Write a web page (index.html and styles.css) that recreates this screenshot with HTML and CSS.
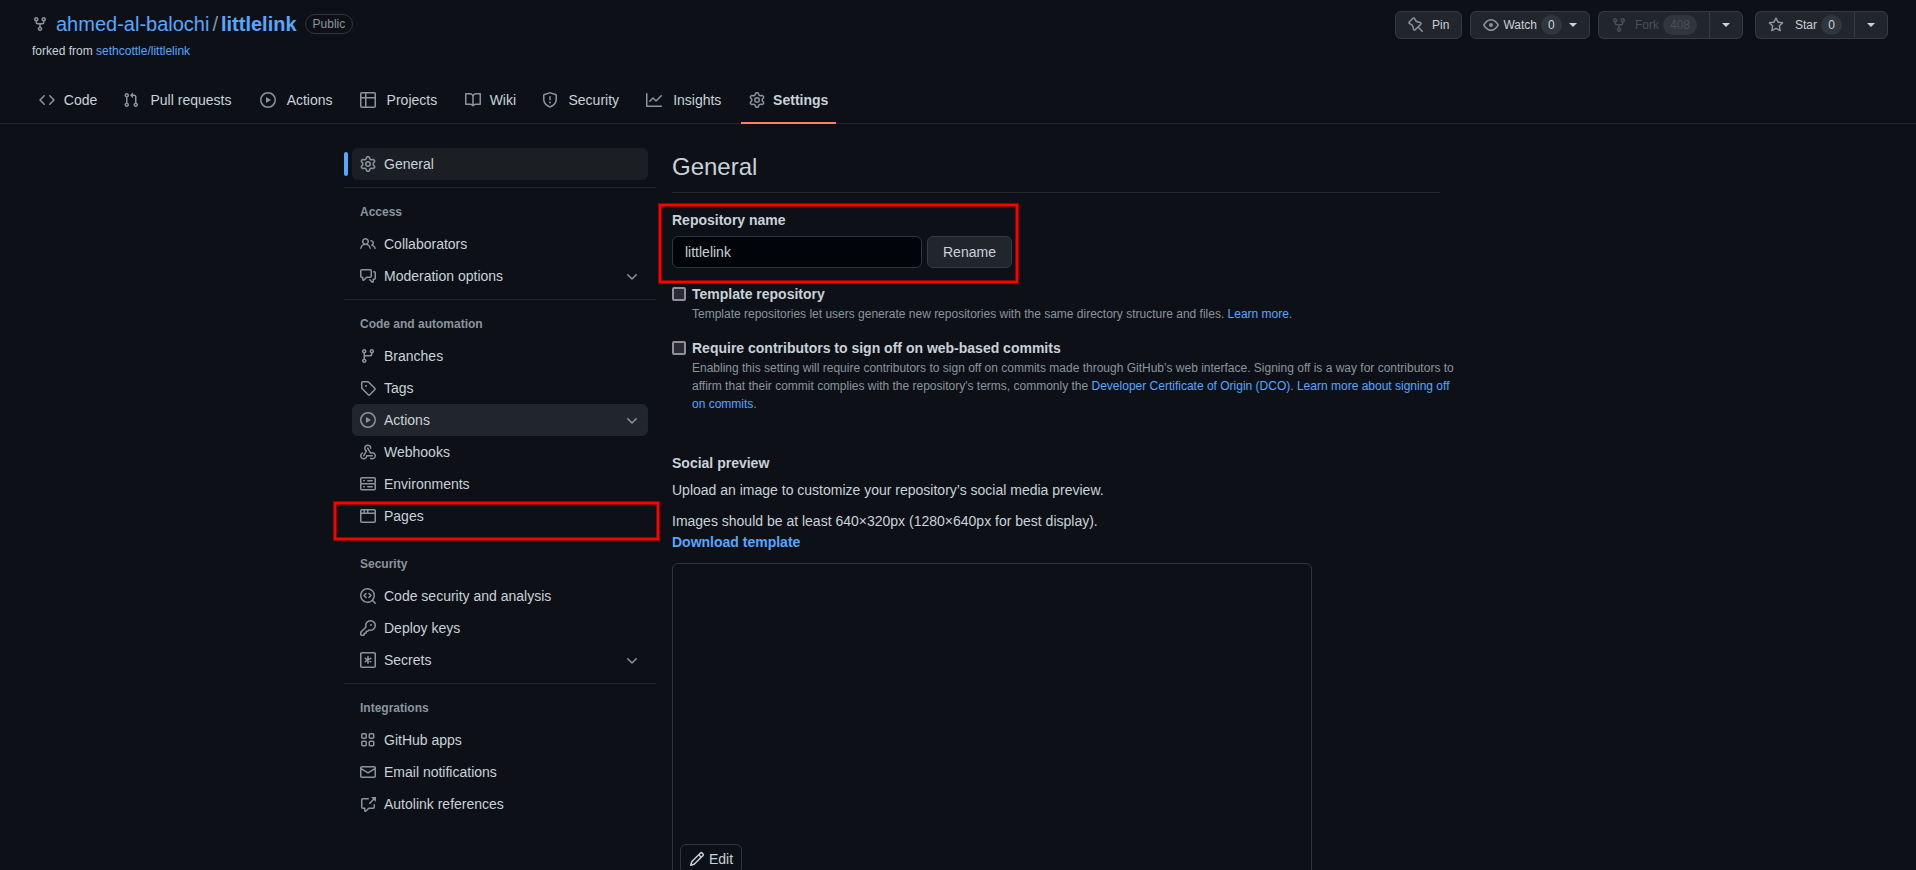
FILE: index.html
```html
<!DOCTYPE html>
<html lang="en">
<head>
<meta charset="utf-8">
<meta name="viewport" content="width=device-width, initial-scale=1">
<title>Settings · ahmed-al-balochi/littlelink</title>
<link rel="stylesheet" href="styles.css">
</head>
<body>
<svg class="sprite" aria-hidden="true">
<symbol id="fork" viewBox="0 0 16 16"><path fill-rule="evenodd" d="M5 3.25a.75.75 0 11-1.5 0 .75.75 0 011.5 0zm0 2.122a2.25 2.25 0 10-1.5 0v.878A2.25 2.25 0 005.75 8.5h1.5v2.128a2.251 2.251 0 101.5 0V8.5h1.5a2.25 2.25 0 002.25-2.25v-.878a2.25 2.25 0 10-1.5 0v.878a.75.75 0 01-.75.75h-4.5A.75.75 0 015 6.25v-.878zm3.75 7.378a.75.75 0 11-1.5 0 .75.75 0 011.5 0zm3-8.75a.75.75 0 100-1.5.75.75 0 000 1.5z"/></symbol>
<symbol id="code" viewBox="0 0 16 16"><path fill-rule="evenodd" d="M4.72 3.22a.75.75 0 011.06 1.06L2.06 8l3.72 3.72a.75.75 0 11-1.06 1.06L.47 8.53a.75.75 0 010-1.06l4.25-4.25zm6.56 0a.75.75 0 10-1.06 1.06L13.94 8l-3.72 3.72a.75.75 0 101.06 1.06l4.25-4.25a.75.75 0 000-1.06l-4.25-4.25z"/></symbol>
<symbol id="pull" viewBox="0 0 16 16"><path fill-rule="evenodd" d="M7.177 3.073L9.573.677A.25.25 0 0110 .854v4.792a.25.25 0 01-.427.177L7.177 3.427a.25.25 0 010-.354zM3.75 2.5a.75.75 0 100 1.5.75.75 0 000-1.5zm-2.25.75a2.25 2.25 0 113 2.122v5.256a2.251 2.251 0 11-1.5 0V5.372A2.25 2.25 0 011.5 3.25zM11 2.5h-1V4h1a1 1 0 011 1v5.628a2.251 2.251 0 101.5 0V5A2.5 2.5 0 0011 2.5zm1 10.25a.75.75 0 111.5 0 .75.75 0 01-1.5 0zM3.75 12a.75.75 0 100 1.5.75.75 0 000-1.5z"/></symbol>
<symbol id="play" viewBox="0 0 16 16"><path fill-rule="evenodd" d="M1.5 8a6.5 6.5 0 1113 0 6.5 6.5 0 01-13 0zM8 0a8 8 0 100 16A8 8 0 008 0zM6.379 5.227A.25.25 0 006 5.442v5.117a.25.25 0 00.379.214l4.264-2.559a.25.25 0 000-.428L6.379 5.227z"/></symbol>
<symbol id="table" viewBox="0 0 16 16"><path fill-rule="evenodd" d="M0 1.75C0 .784.784 0 1.75 0h12.5C15.216 0 16 .784 16 1.75v12.5A1.75 1.75 0 0114.25 16H1.75A1.75 1.75 0 010 14.25V1.75zM1.5 6.5v7.75c0 .138.112.25.25.25H5v-8H1.5zM5 5H1.5V1.75a.25.25 0 01.25-.25H5V5zm1.5 1.5v8h7.75a.25.25 0 00.25-.25V6.5h-8zm8-1.5h-8V1.5h7.75a.25.25 0 01.25.25V5z"/></symbol>
<symbol id="book" viewBox="0 0 16 16"><path fill-rule="evenodd" d="M0 1.75A.75.75 0 01.75 1h4.253c1.227 0 2.317.59 3 1.501A3.744 3.744 0 0111.006 1h4.245a.75.75 0 01.75.75v10.5a.75.75 0 01-.75.75h-4.507a2.25 2.25 0 00-1.591.659l-.622.621a.75.75 0 01-1.06 0l-.622-.621A2.25 2.25 0 005.258 13H.75a.75.75 0 01-.75-.75V1.75zm8.755 3a2.25 2.25 0 012.25-2.25H14.5v9h-3.757c-.71 0-1.4.201-1.992.572l.004-7.322zm-1.504 7.324l.004-5.073-.002-2.253A2.25 2.25 0 005.003 2.5H1.5v9h3.757a3.75 3.75 0 011.994.574z"/></symbol>
<symbol id="shield" viewBox="0 0 16 16"><path fill-rule="evenodd" d="M7.467.133a1.75 1.75 0 011.066 0l5.25 1.68A1.75 1.75 0 0115 3.48V7c0 1.566-.32 3.182-1.303 4.682-.983 1.498-2.585 2.813-5.032 3.855a1.7 1.7 0 01-1.33 0c-2.447-1.042-4.049-2.357-5.032-3.855C1.32 10.182 1 8.566 1 7V3.48a1.75 1.75 0 011.217-1.667l5.25-1.68zm.61 1.429a.25.25 0 00-.153 0l-5.25 1.68a.25.25 0 00-.174.238V7c0 1.358.275 2.666 1.057 3.86.784 1.194 2.121 2.34 4.366 3.297a.2.2 0 00.154 0c2.245-.956 3.582-2.104 4.366-3.298C13.225 9.666 13.5 8.36 13.5 7V3.48a.25.25 0 00-.174-.237l-5.25-1.68zM9 10.5a1 1 0 11-2 0 1 1 0 012 0zm-.25-5.75a.75.75 0 10-1.5 0v3a.75.75 0 001.5 0v-3z"/></symbol>
<symbol id="graph" viewBox="0 0 16 16"><path fill-rule="evenodd" d="M1.5 1.75a.75.75 0 00-1.5 0v12.5c0 .414.336.75.75.75h14.5a.75.75 0 000-1.5H1.5V1.75zm14.28 2.53a.75.75 0 00-1.06-1.06L10 7.94 7.53 5.47a.75.75 0 00-1.06 0L3.22 8.72a.75.75 0 001.06 1.06L7 7.06l2.47 2.47a.75.75 0 001.06 0l5.25-5.25z"/></symbol>
<symbol id="gear" viewBox="0 0 16 16"><path fill-rule="evenodd" d="M7.429 1.525a6.593 6.593 0 011.142 0c.036.003.108.036.137.146l.289 1.105c.147.56.55.967.997 1.189.174.086.341.183.501.29.417.278.97.423 1.53.27l1.102-.303c.11-.03.175.016.195.046.219.31.41.641.573.989.014.031.022.11-.059.19l-.815.806c-.411.406-.562.957-.53 1.456a4.588 4.588 0 010 .582c-.032.499.119 1.05.53 1.456l.815.806c.08.08.073.159.059.19a6.494 6.494 0 01-.573.99c-.02.029-.086.074-.195.045l-1.103-.303c-.559-.153-1.112-.008-1.529.27-.16.107-.327.204-.5.29-.449.222-.851.628-.998 1.189l-.289 1.105c-.029.11-.101.143-.137.146a6.613 6.613 0 01-1.142 0c-.036-.003-.108-.037-.137-.146l-.289-1.105c-.147-.56-.55-.967-.997-1.189a4.502 4.502 0 01-.501-.29c-.417-.278-.97-.423-1.53-.27l-1.102.303c-.11.03-.175-.016-.195-.046a6.492 6.492 0 01-.573-.989c-.014-.031-.022-.11.059-.19l.815-.806c.411-.406.562-.957.53-1.456a4.587 4.587 0 010-.582c.032-.499-.119-1.05-.53-1.456l-.815-.806c-.08-.08-.073-.159-.059-.19a6.44 6.44 0 01.573-.99c.02-.029.086-.075.195-.045l1.103.303c.559.153 1.112.008 1.529-.27.16-.107.327-.204.5-.29.449-.222.851-.628.998-1.189l.289-1.105c.029-.11.101-.143.137-.146zM8 0c-.236 0-.47.01-.701.03-.743.065-1.29.615-1.458 1.261l-.29 1.106c-.017.066-.078.158-.211.224a5.994 5.994 0 00-.668.386c-.123.082-.233.09-.3.071L3.27 2.776c-.644-.177-1.392.02-1.82.63a7.977 7.977 0 00-.704 1.217c-.315.675-.111 1.422.363 1.891l.815.806c.05.048.098.147.088.294a6.084 6.084 0 000 .772c.01.147-.038.246-.088.294l-.815.806c-.474.469-.678 1.216-.363 1.891.2.428.436.835.704 1.218.428.609 1.176.806 1.82.63l1.103-.303c.066-.019.176-.011.299.071.213.143.436.272.668.386.133.066.194.158.212.224l.289 1.106c.169.646.715 1.196 1.458 1.26a8.094 8.094 0 001.402 0c.743-.064 1.29-.614 1.458-1.26l.29-1.106c.017-.066.078-.158.211-.224a5.98 5.98 0 00.668-.386c.123-.082.233-.09.3-.071l1.102.302c.644.177 1.392-.02 1.82-.63.268-.382.505-.789.704-1.217.315-.675.111-1.422-.364-1.891l-.814-.806c-.05-.048-.098-.147-.088-.294a6.1 6.1 0 000-.772c-.01-.147.039-.246.088-.294l.814-.806c.475-.469.679-1.216.364-1.891a7.992 7.992 0 00-.704-1.218c-.428-.609-1.176-.806-1.82-.63l-1.103.303c-.066.019-.176.011-.299-.071a5.991 5.991 0 00-.668-.386c-.133-.066-.194-.158-.212-.224L10.16 1.29C9.99.645 9.444.095 8.701.031A8.094 8.094 0 008 0zm1.5 8a1.5 1.5 0 11-3 0 1.5 1.5 0 013 0zM11 8a3 3 0 11-6 0 3 3 0 016 0z"/></symbol>
<symbol id="people" viewBox="0 0 16 16"><path fill-rule="evenodd" d="M5.5 3.5a2 2 0 100 4 2 2 0 000-4zM2 5.5a3.5 3.5 0 115.898 2.549 5.507 5.507 0 013.034 4.084.75.75 0 11-1.482.235 4.001 4.001 0 00-7.9 0 .75.75 0 01-1.482-.236A5.507 5.507 0 013.102 8.05 3.49 3.49 0 012 5.5zM11 4a.75.75 0 100 1.5 1.5 1.5 0 01.666 2.844.75.75 0 00-.416.672v.352a.75.75 0 00.574.73c1.2.289 2.162 1.2 2.522 2.372a.75.75 0 101.434-.44 5.01 5.01 0 00-2.56-3.012A3 3 0 0011 4z"/></symbol>
<symbol id="discussion" viewBox="0 0 16 16"><path fill-rule="evenodd" d="M1.5 2.75a.25.25 0 01.25-.25h8.5a.25.25 0 01.25.25v5.5a.25.25 0 01-.25.25h-3.5a.75.75 0 00-.53.22L3.5 11.44V9.25a.75.75 0 00-.75-.75h-1a.25.25 0 01-.25-.25v-5.5zM1.75 1A1.75 1.75 0 000 2.75v5.5C0 9.216.784 10 1.75 10H2v1.543a1.457 1.457 0 002.487 1.03L7.061 10h3.189A1.75 1.75 0 0012 8.25v-5.5A1.75 1.75 0 0010.25 1h-8.5zM14.5 4.75a.25.25 0 00-.25-.25h-.5a.75.75 0 110-1.5h.5c.966 0 1.75.784 1.75 1.75v5.5A1.75 1.75 0 0114.25 12H14v1.543a1.457 1.457 0 01-2.487 1.03L9.22 12.28a.75.75 0 111.06-1.06l2.22 2.22v-2.19a.75.75 0 01.75-.75h1a.25.25 0 00.25-.25v-5.5z"/></symbol>
<symbol id="chevron" viewBox="0 0 16 16"><path fill-rule="evenodd" d="M12.78 6.22a.75.75 0 010 1.06l-4.25 4.25a.75.75 0 01-1.06 0L3.22 7.28a.75.75 0 011.06-1.06L8 9.94l3.72-3.72a.75.75 0 011.06 0z"/></symbol>
<symbol id="branch" viewBox="0 0 16 16"><path fill-rule="evenodd" d="M11.75 2.5a.75.75 0 100 1.5.75.75 0 000-1.5zm-2.25.75a2.25 2.25 0 113 2.122V6A2.5 2.5 0 0110 8.5H6a1 1 0 00-1 1v1.128a2.251 2.251 0 11-1.5 0V5.372a2.25 2.25 0 111.5 0v1.836A2.492 2.492 0 016 7h4a1 1 0 001-1v-.628A2.25 2.25 0 019.5 3.25zM4.25 12a.75.75 0 100 1.5.75.75 0 000-1.5zM3.5 3.25a.75.75 0 111.5 0 .75.75 0 01-1.5 0z"/></symbol>
<symbol id="tag" viewBox="0 0 16 16"><path fill-rule="evenodd" d="M2.5 7.775V2.75a.25.25 0 01.25-.25h5.025a.25.25 0 01.177.073l6.25 6.25a.25.25 0 010 .354l-5.025 5.025a.25.25 0 01-.354 0l-6.25-6.25a.25.25 0 01-.073-.177zm-1.5 0V2.75C1 1.784 1.784 1 2.75 1h5.025c.464 0 .91.184 1.238.513l6.25 6.25a1.75 1.75 0 010 2.474l-5.026 5.026a1.75 1.75 0 01-2.474 0l-6.25-6.25A1.75 1.75 0 011 7.775zM6 5a1 1 0 100 2 1 1 0 000-2z"/></symbol>
<symbol id="webhook" viewBox="0 0 16 16"><path d="M5.5 4.25a2.25 2.25 0 014.5 0 .75.75 0 001.5 0 3.75 3.75 0 10-6.14 2.889l-2.272 4.258a.75.75 0 001.324.706L7 7.25a.75.75 0 00-.309-1.015A2.25 2.25 0 015.5 4.25z"/><path d="M7.364 3.607a.75.75 0 011.03.257l2.608 4.349a3.75 3.75 0 11-.628 6.785.75.75 0 01.752-1.299 2.25 2.25 0 10-.033-3.88.75.75 0 01-1.03-.256L7.107 4.636a.75.75 0 01.257-1.03z"/><path d="M2.9 8.776A.75.75 0 012.625 9.8 2.25 2.25 0 106 11.75a.75.75 0 01.75-.751h5.5a.75.75 0 010 1.5H7.425a3.751 3.751 0 11-5.55-3.998.75.75 0 011.024.274z"/></symbol>
<symbol id="server" viewBox="0 0 16 16"><path fill-rule="evenodd" d="M1.75 1A1.75 1.75 0 000 2.75v4c0 .372.116.717.314 1a1.742 1.742 0 00-.314 1v4c0 .966.784 1.75 1.75 1.75h12.5A1.75 1.75 0 0016 12.75v-4c0-.372-.116-.717-.314-1 .198-.283.314-.628.314-1v-4A1.75 1.75 0 0014.25 1H1.75zm0 7.5a.25.25 0 00-.25.25v4c0 .138.112.25.25.25h12.5a.25.25 0 00.25-.25v-4a.25.25 0 00-.25-.25H1.75zM1.5 2.75a.25.25 0 01.25-.25h12.5a.25.25 0 01.25.25v4a.25.25 0 01-.25.25H1.75a.25.25 0 01-.25-.25v-4zm5.5 2A.75.75 0 017.75 4h4.5a.75.75 0 010 1.5h-4.5A.75.75 0 017 4.75zM7.75 10a.75.75 0 000 1.5h4.5a.75.75 0 000-1.5h-4.5zM3 4.75A.75.75 0 013.75 4h.5a.75.75 0 010 1.5h-.5A.75.75 0 013 4.75zM3.75 10a.75.75 0 000 1.5h.5a.75.75 0 000-1.5h-.5z"/></symbol>
<symbol id="browser" viewBox="0 0 16 16"><path fill-rule="evenodd" d="M0 2.75C0 1.784.784 1 1.75 1h12.5c.966 0 1.75.784 1.75 1.75v10.5A1.75 1.75 0 0114.25 15H1.75A1.75 1.75 0 010 13.25V2.75zm1.75-.25a.25.25 0 00-.25.25V4.5h2v-2H1.75zM5 2.5v2h2v-2H5zm3.5 0v2h6V2.75a.25.25 0 00-.25-.25H8.5zm6 3.5h-13v7.25c0 .138.112.25.25.25h12.5a.25.25 0 00.25-.25V6z"/></symbol>
<symbol id="codescan" viewBox="0 0 16 16"><path d="M8.47 4.97a.75.75 0 000 1.06L9.94 7.5 8.47 8.97a.75.75 0 101.06 1.06l2-2a.75.75 0 000-1.06l-2-2a.75.75 0 00-1.06 0zM6.53 6.03a.75.75 0 00-1.06-1.06l-2 2a.75.75 0 000 1.06l2 2a.75.75 0 101.06-1.06L5.06 7.5l1.47-1.47z"/><path fill-rule="evenodd" d="M12.246 13.307a7.5 7.5 0 111.06-1.06l2.474 2.473a.75.75 0 11-1.06 1.06l-2.474-2.473zM1.5 7.5a6 6 0 1110.386 4.094.75.75 0 00-.292.293A6 6 0 011.5 7.5z"/></symbol>
<symbol id="key" viewBox="0 0 16 16"><path fill-rule="evenodd" d="M6.5 5.5a4 4 0 112.731 3.795.75.75 0 00-.768.18L7.44 10.5H6.25a.75.75 0 00-.75.75v1.19l-.06.06H4.25a.75.75 0 00-.75.75v1.19l-.06.06H1.75a.25.25 0 01-.25-.25v-1.69l5.024-5.023a.75.75 0 00.181-.768A3.995 3.995 0 016.5 5.5zm4-5.5a5.5 5.5 0 00-5.348 6.788L.22 11.72a.75.75 0 00-.22.53v2C0 15.216.784 16 1.75 16h2a.75.75 0 00.53-.22l.5-.5a.75.75 0 00.22-.53V14h.75a.75.75 0 00.53-.22l.5-.5a.75.75 0 00.22-.53V12h.75a.75.75 0 00.53-.22l.932-.932A5.5 5.5 0 1010.5 0zm.5 6a1 1 0 100-2 1 1 0 000 2z"/></symbol>
<symbol id="asterisk" viewBox="0 0 16 16"><rect x=".75" y=".75" width="14.5" height="14.5" rx="1" fill="none" stroke="currentColor" stroke-width="1.5"/><path d="M8 4.75v6.5M5.2 6.4l5.6 3.2M5.2 9.6l5.6-3.2" fill="none" stroke="currentColor" stroke-width="1.6" stroke-linecap="round"/></symbol>
<symbol id="apps" viewBox="0 0 16 16"><g fill="none" stroke="currentColor" stroke-width="1.5"><rect x="1.75" y="1.75" width="4.5" height="4.5" rx="1"/><rect x="9.25" y="1.75" width="4.5" height="4.5" rx="1"/><rect x="1.75" y="9.25" width="4.5" height="4.5" rx="1"/><rect x="9.25" y="9.25" width="4.5" height="4.5" rx="1"/></g></symbol>
<symbol id="mail" viewBox="0 0 16 16"><path fill-rule="evenodd" d="M1.75 2A1.75 1.75 0 000 3.75v8.5C0 13.216.784 14 1.75 14h12.5A1.75 1.75 0 0016 12.25v-8.5A1.75 1.75 0 0014.25 2H1.75zM14.5 4.07v-.32a.25.25 0 00-.25-.25H1.75a.25.25 0 00-.25.25v.32L8 7.88l6.5-3.81zm-13 1.74v6.441c0 .138.112.25.25.25h12.5a.25.25 0 00.25-.25V5.809L8.38 9.397a.75.75 0 01-.76 0L1.5 5.809z"/></symbol>
<symbol id="crossref" viewBox="0 0 16 16"><path fill-rule="evenodd" d="M16 1.25v4.146a.25.25 0 01-.427.177L14.03 4.03l-3.75 3.75a.75.75 0 11-1.06-1.06l3.75-3.75-1.543-1.543A.25.25 0 0111.604 1h4.146a.25.25 0 01.25.25zM2.75 3.5a.25.25 0 00-.25.25v7.5c0 .138.112.25.25.25h2a.75.75 0 01.75.75v2.19l2.72-2.72a.75.75 0 01.53-.22h4.5a.25.25 0 00.25-.25v-2.5a.75.75 0 111.5 0v2.5A1.75 1.75 0 0113.25 13H9.06l-2.573 2.573A1.457 1.457 0 014 14.543V13H2.75A1.75 1.75 0 011 11.25v-7.5C1 2.784 1.784 2 2.75 2h5.5a.75.75 0 010 1.5h-5.5z"/></symbol>
<symbol id="pencil" viewBox="0 0 16 16"><path fill-rule="evenodd" d="M11.013 1.427a1.75 1.75 0 012.474 0l1.086 1.086a1.75 1.75 0 010 2.474l-8.61 8.61c-.21.21-.47.364-.756.445l-3.251.93a.75.75 0 01-.927-.928l.929-3.25a1.75 1.75 0 01.445-.758l8.61-8.61zm1.414 1.06a.25.25 0 00-.354 0L10.811 3.75l1.439 1.44 1.263-1.263a.25.25 0 000-.354l-1.086-1.086zM11.189 6.25L9.75 4.81l-6.286 6.287a.25.25 0 00-.064.108l-.558 1.953 1.953-.558a.249.249 0 00.108-.064l6.286-6.286z"/></symbol>
<symbol id="pin" viewBox="0 0 16 16"><path fill-rule="evenodd" d="M4.456.734a1.75 1.75 0 012.826.504l.613 1.327a3.081 3.081 0 002.084 1.707l2.454.584c1.332.317 1.8 1.972.832 2.94L11.06 10l3.72 3.72a.75.75 0 11-1.061 1.06L10 11.06l-2.204 2.205c-.968.968-2.623.5-2.94-.832l-.584-2.454a3.081 3.081 0 00-1.707-2.084l-1.327-.613a1.75 1.75 0 01-.504-2.826L4.456.734zM5.92 1.866a.25.25 0 00-.404-.072L1.794 5.516a.25.25 0 00.072.404l1.328.613A4.582 4.582 0 015.73 9.63l.584 2.454a.25.25 0 00.42.12l5.47-5.47a.25.25 0 00-.12-.42L9.63 5.73a4.581 4.581 0 01-3.098-2.537L5.92 1.866z"/></symbol>
<symbol id="eye" viewBox="0 0 16 16"><path fill-rule="evenodd" d="M1.679 7.932c.412-.621 1.242-1.75 2.366-2.717C5.175 4.242 6.527 3.5 8 3.5c1.473 0 2.824.742 3.955 1.715 1.124.967 1.954 2.096 2.366 2.717a.119.119 0 010 .136c-.412.621-1.242 1.75-2.366 2.717C10.825 11.758 9.473 12.5 8 12.5c-1.473 0-2.824-.742-3.955-1.715C2.92 9.818 2.09 8.69 1.679 8.068a.119.119 0 010-.136zM8 2c-1.981 0-3.67.992-4.933 2.078C1.797 5.169.88 6.423.43 7.1a1.619 1.619 0 000 1.798c.45.678 1.367 1.932 2.637 3.024C4.329 13.008 6.019 14 8 14c1.981 0 3.67-.992 4.933-2.078 1.27-1.091 2.187-2.345 2.637-3.023a1.619 1.619 0 000-1.798c-.45-.678-1.367-1.932-2.637-3.023C11.671 2.992 9.981 2 8 2zm0 8a2 2 0 100-4 2 2 0 000 4z"/></symbol>
<symbol id="star" viewBox="0 0 16 16"><path fill-rule="evenodd" d="M8 .25a.75.75 0 01.673.418l1.882 3.815 4.21.612a.75.75 0 01.416 1.279l-3.046 2.97.719 4.192a.75.75 0 01-1.088.791L8 12.347l-3.766 1.98a.75.75 0 01-1.088-.79l.72-4.194L.818 6.374a.75.75 0 01.416-1.28l4.21-.611L7.327.668A.75.75 0 018 .25zm0 2.445L6.615 5.5a.75.75 0 01-.564.41l-3.097.45 2.24 2.184a.75.75 0 01.216.664l-.528 3.084 2.769-1.456a.75.75 0 01.698 0l2.77 1.456-.53-3.084a.75.75 0 01.216-.664l2.24-2.183-3.096-.45a.75.75 0 01-.564-.41L8 2.694z"/></symbol>
</svg>

<header class="repo-header">
  <div class="repo-top">
    <div>
      <h1 class="repo-title">
        <svg class="icon"><use href="#fork"/></svg>
        <a href="#">ahmed-al-balochi</a><span class="slash">/</span><a class="strong" href="#">littlelink</a>
        <span class="pill">Public</span>
      </h1>
      <p class="forked">forked from <a href="#">sethcottle/littlelink</a></p>
    </div>
    <div class="repo-actions">
      <button class="btn btn-sm" type="button"><svg class="icon"><use href="#pin"/></svg>Pin</button>
      <button class="btn btn-sm btn-watch" type="button"><svg class="icon"><use href="#eye"/></svg>Watch<span class="counter">0</span><span class="caret"></span></button>
      <div class="btn-group btn-group-fork">
        <button class="btn btn-sm" type="button" disabled><svg class="icon"><use href="#fork"/></svg>Fork<span class="counter">408</span></button>
        <button class="btn btn-sm" type="button" aria-label="See your forks"><span class="caret"></span></button>
      </div>
      <div class="btn-group btn-group-star">
        <button class="btn btn-sm btn-star" type="button"><svg class="icon"><use href="#star"/></svg>Star<span class="counter">0</span></button>
        <button class="btn btn-sm" type="button" aria-label="Add to list"><span class="caret"></span></button>
      </div>
    </div>
  </div>
  <nav class="tabs" aria-label="Repository">
    <a class="tab" href="#"><svg class="icon"><use href="#code"/></svg><span class="tab-label" data-content="Code">Code</span></a>
    <a class="tab" href="#"><svg class="icon"><use href="#pull"/></svg><span class="tab-label" data-content="Pull requests">Pull requests</span></a>
    <a class="tab" href="#"><svg class="icon"><use href="#play"/></svg><span class="tab-label" data-content="Actions">Actions</span></a>
    <a class="tab" href="#"><svg class="icon"><use href="#table"/></svg><span class="tab-label" data-content="Projects">Projects</span></a>
    <a class="tab" href="#"><svg class="icon"><use href="#book"/></svg><span class="tab-label" data-content="Wiki">Wiki</span></a>
    <a class="tab" href="#"><svg class="icon"><use href="#shield"/></svg><span class="tab-label" data-content="Security">Security</span></a>
    <a class="tab" href="#"><svg class="icon"><use href="#graph"/></svg><span class="tab-label" data-content="Insights">Insights</span></a>
    <a class="tab selected" href="#" aria-current="page"><svg class="icon"><use href="#gear"/></svg><span class="tab-label" data-content="Settings">Settings</span></a>
  </nav>
</header>

<div class="layout">
  <nav class="sidebar" aria-label="Settings">
    <section class="group">
      <a class="item current" href="#" aria-current="page"><svg class="icon"><use href="#gear"/></svg>General</a>
    </section>
    <section class="group">
      <h2 class="group-title">Access</h2>
      <a class="item" href="#"><svg class="icon"><use href="#people"/></svg>Collaborators</a>
      <button class="item" type="button"><svg class="icon"><use href="#discussion"/></svg>Moderation options<svg class="icon chevron"><use href="#chevron"/></svg></button>
    </section>
    <section class="group">
      <h2 class="group-title">Code and automation</h2>
      <a class="item" href="#"><svg class="icon"><use href="#branch"/></svg>Branches</a>
      <a class="item" href="#"><svg class="icon"><use href="#tag"/></svg>Tags</a>
      <button class="item hovered" type="button"><svg class="icon"><use href="#play"/></svg>Actions<svg class="icon chevron"><use href="#chevron"/></svg></button>
      <a class="item" href="#"><svg class="icon"><use href="#webhook"/></svg>Webhooks</a>
      <a class="item" href="#"><svg class="icon"><use href="#server"/></svg>Environments</a>
      <a class="item" href="#"><svg class="icon"><use href="#browser"/></svg>Pages<span class="highlight highlight-pages"></span></a>
    </section>
    <section class="group">
      <h2 class="group-title">Security</h2>
      <a class="item" href="#"><svg class="icon"><use href="#codescan"/></svg>Code security and analysis</a>
      <a class="item" href="#"><svg class="icon"><use href="#key"/></svg>Deploy keys</a>
      <button class="item" type="button"><svg class="icon"><use href="#asterisk"/></svg>Secrets<svg class="icon chevron"><use href="#chevron"/></svg></button>
    </section>
    <section class="group">
      <h2 class="group-title">Integrations</h2>
      <a class="item" href="#"><svg class="icon"><use href="#apps"/></svg>GitHub apps</a>
      <a class="item" href="#"><svg class="icon"><use href="#mail"/></svg>Email notifications</a>
      <a class="item" href="#"><svg class="icon"><use href="#crossref"/></svg>Autolink references</a>
    </section>
  </nav>

  <main class="main">
    <h2 class="page-title">General</h2>
    <form class="rename">
      <label for="repo-name">Repository name</label>
      <div class="rename-row">
        <input class="text-input" id="repo-name" type="text" value="littlelink">
        <button class="btn" type="button">Rename</button>
      </div>
      <span class="highlight highlight-rename"></span>
    </form>

    <div class="option">
      <input class="checkbox" id="template" type="checkbox">
      <div>
        <label for="template">Template repository</label>
        <p class="note">Template repositories let users generate new repositories with the same directory structure and files. <a href="#">Learn more.</a></p>
      </div>
    </div>
    <div class="option">
      <input class="checkbox" id="signoff" type="checkbox">
      <div>
        <label for="signoff">Require contributors to sign off on web-based commits</label>
        <p class="note">Enabling this setting will require contributors to sign off on commits made through GitHub’s web interface. Signing off is a way for contributors to affirm that their commit complies with the repository's terms, commonly the <a href="#">Developer Certificate of Origin (DCO)</a>. <a href="#">Learn more about signing off on commits</a>.</p>
      </div>
    </div>

    <section class="social">
      <h3>Social preview</h3>
      <p>Upload an image to customize your repository’s social media preview.</p>
      <p>Images should be at least 640×320px (1280×640px for best display).<br><a class="strong" href="#">Download template</a></p>
      <div class="preview">
        <button class="btn btn-edit" type="button"><svg class="icon"><use href="#pencil"/></svg>Edit</button>
      </div>
    </section>
  </main>
</div>
</body>
</html>
```

FILE: styles.css
```css
:root {
  --bg: #0d1117;
  --text: #c9d1d9;
  --muted: #8b949e;
  --link: #58a6ff;
  --line: #21262d;
  --border: #30363d;
  --btn: #21262d;
}

* { box-sizing: border-box; }

html { scrollbar-width: none; }

body {
  margin: 0;
  height: 100vh;
  overflow: hidden;
  background: var(--bg);
  color: var(--text);
  font: 14px/21px "Liberation Sans", Arial, sans-serif;
}

h1, h2, h3, p { margin: 0; }
a { color: var(--link); text-decoration: none; }
button, input { font: inherit; color: inherit; margin: 0; }
.strong { font-weight: 700; }
.sprite { display: none; }

.icon {
  width: 16px;
  height: 16px;
  flex: none;
  color: var(--muted);
  fill: currentColor;
}

/* Header */
.repo-header { border-bottom: 1px solid var(--line); }

.repo-top {
  display: flex;
  justify-content: space-between;
  align-items: flex-start;
  padding: 9px 28px 0 32px;
  margin-bottom: 16px;
}

.repo-title {
  display: flex;
  align-items: center;
  font-size: 20px;
  line-height: 30px;
  font-weight: 400;
}
.repo-title .icon { margin-right: 8px; }
.slash { margin: 0 3px; color: var(--muted); }

.pill {
  margin-left: 8px;
  padding: 0 7px;
  border: 1px solid var(--border);
  border-radius: 20px;
  color: var(--muted);
  font-size: 12px;
  line-height: 18px;
}

.forked { margin-top: 3px; font-size: 12px; line-height: 18px; }

.repo-actions { display: flex; padding-top: 2px; gap: 8px; }

.btn {
  display: inline-flex;
  align-items: center;
  justify-content: center;
  height: 32px;
  padding: 0 15px;
  border: 1px solid #363b42;
  border-radius: 6px;
  background: var(--btn);
  white-space: nowrap;
}
.btn-sm {
  height: 28px;
  padding: 0 12px;
  font-size: 12px;
}
.btn-sm .icon { margin-right: 8px; }
.btn-watch .icon { margin-right: 4px; }
.btn-star .icon { margin-right: 11px; }
.btn:disabled { color: #484f58; }
.btn:disabled .icon { color: #484f58; }

.counter {
  min-width: 21px;
  margin-left: 4px;
  padding: 0 7px;
  border-radius: 20px;
  background: #30363d;
  line-height: 20px;
  text-align: center;
}

.caret {
  border: 4px solid transparent;
  border-top-color: currentColor;
  border-bottom: 0;
}
.btn-watch .caret { margin-left: 7px; }

.btn-group { display: flex; }
.btn-group-star { margin-left: 4px; }
.btn-group .btn:first-child { border-radius: 6px 0 0 6px; border-right: 0; }
.btn-group .btn:last-child { border-radius: 0 6px 6px 0; }

.tabs { display: flex; gap: 9px; padding: 0 31px; margin-bottom: -1px; }
.tab {
  display: flex;
  align-items: center;
  gap: 8px;
  height: 48px;
  padding: 0 8px;
  color: var(--text);
}
.tab-label { text-align: center; }
/* Reserves the bold width so that labels do not shift when selected */
.tab-label::after {
  content: attr(data-content);
  display: block;
  height: 0;
  overflow: hidden;
  visibility: hidden;
  font-weight: 700;
}
.selected { box-shadow: inset 0 -2px #f78166; font-weight: 700; }

/* Two-column body */
.layout {
  display: flex;
  gap: 16px;
  max-width: 1228px;
  margin: 0 auto;
  padding-top: 24px;
}

.sidebar { flex: 0 0 312px; }
.group { padding: 0 8px; }
.group + .group { margin-top: 7px; border-top: 1px solid var(--line); }
.group-title {
  padding: 16px 8px 8px;
  color: var(--muted);
  font-size: 12px;
  line-height: 16px;
}

.item {
  position: relative;
  display: flex;
  align-items: center;
  gap: 8px;
  width: 100%;
  height: 32px;
  padding: 0 8px;
  border: 0;
  border-radius: 6px;
  background: none;
  color: var(--text);
  text-align: left;
}
.chevron { margin-left: auto; }
.current { background: #1b1f23; }
.current::before {
  content: "";
  position: absolute;
  left: -8px;
  top: 4px;
  width: 4px;
  height: 24px;
  border-radius: 2px;
  background: var(--link);
}
.hovered { background: #21262d; }

.highlight {
  position: absolute;
  border: 1px solid #8c0306;
  box-shadow: inset 0 0 0 2px #f00, inset 0 0 0 3px #8c0306;
  pointer-events: none;
}
.highlight-pages { left: -19px; right: -12px; top: 1px; height: 40px; }
.highlight-rename { left: -14px; top: -7px; width: 361px; height: 81px; }

/* Main column */
.main { flex: 0 1 768px; min-width: 0; }
.page-title {
  padding: 1px 0 7px;
  border-bottom: 1px solid var(--line);
  font-size: 24px;
  line-height: 36px;
  font-weight: 400;
}
label { font-weight: 700; }

.rename { position: relative; margin-top: 17px; }
.rename label { display: block; }
.rename-row { display: flex; gap: 5px; margin-top: 5px; }
.text-input {
  width: 250px;
  height: 32px;
  padding: 0 12px;
  border: 1px solid var(--border);
  border-radius: 6px;
  background: #010409;
}

.option { display: flex; gap: 6px; margin: 16px -18px 0 0; }
.option + .option { margin-top: 15px; }
.checkbox {
  appearance: none;
  flex: none;
  width: 14px;
  height: 14px;
  margin-top: 3px;
  border: 2px solid #8f8f9d;
  border-radius: 2px;
  background: #2b2a33;
}
.note { color: var(--muted); font-size: 12px; line-height: 18px; }

.social { margin-top: 40px; }
.social h3 { font-size: 14px; margin-bottom: 6px; }
.social p { margin-bottom: 10px; }

.preview {
  display: flex;
  align-items: flex-end;
  max-width: 640px;
  height: 320px;
  padding: 8px 7px;
  border: 1px solid var(--border);
  border-radius: 6px;
}
.btn-edit {
  gap: 4px;
  height: 30px;
  padding: 0 8px;
  border-color: var(--border);
  background: var(--bg);
}
.btn-edit .icon { color: var(--text); }
```
